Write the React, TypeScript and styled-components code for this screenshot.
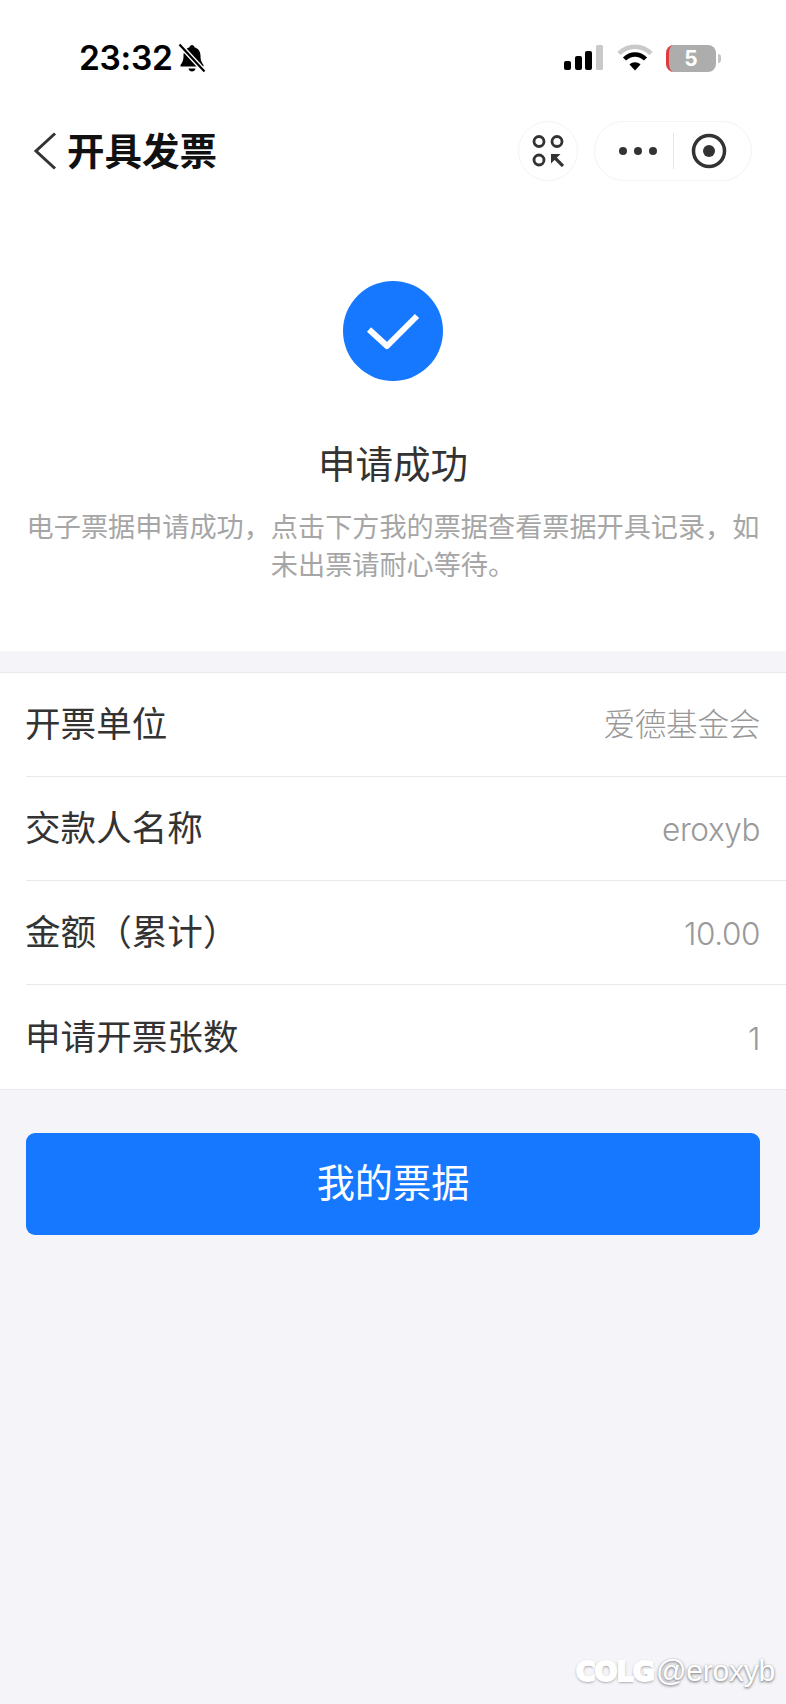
import styled, { createGlobalStyle } from "styled-components";

const GlobalStyle = createGlobalStyle`
  html, body {
    margin: 0;
    padding: 0;
    background: #f4f4f9;
  }
  * {
    box-sizing: border-box;
  }
`;

const cjk = `"Noto Sans CJK SC", "Noto Sans", sans-serif`;
const latinCjk = `Inter, "Noto Sans CJK SC", sans-serif`;

const Page = styled.div`
  position: relative;
  width: 786px;
  height: 1704px;
  overflow: hidden;
  background: #f4f4f9;
  font-family: ${cjk};
`;

const TopSection = styled.section`
  background: #fff;
`;

const StatusBar = styled.div`
  display: flex;
  justify-content: space-between;
  align-items: flex-start;
  height: 121px;
  padding: 43px 65px 0 79px;
`;

const StatusLeft = styled.div`
  display: flex;
  align-items: center;
  gap: 5px;
`;

const Time = styled.span`
  font-family: Inter, "Liberation Sans", sans-serif;
  font-size: 33.500px;
  line-height: 30px;
  font-weight: 600;
  letter-spacing: -0.3px;
  color: #000;
`;

const StatusRight = styled.div`
  display: flex;
  align-items: center;
  gap: 13px;
  height: 30px;
`;

const Battery = styled.div`
  display: flex;
  align-items: center;
  gap: 2px;
`;

const BatteryBody = styled.div`
  width: 50px;
  height: 27px;
  padding-right: 3px;
  border-radius: 8px;
  border-left: 3px solid #e0393e;
  background: #adadad;
  color: #fff;
  font-family: Inter, "Liberation Sans", sans-serif;
  font-size: 21px;
  line-height: 27px;
  font-weight: 700;
  text-align: center;
`;

const BatteryNub = styled.div`
  width: 3px;
  height: 9px;
  border-radius: 0 3px 3px 0;
  background: #c4c4c4;
`;

const NavBar = styled.div`
  display: flex;
  align-items: center;
  height: 60px;
  padding: 0 34px 0 33px;
`;

const BackIcon = styled.svg`
  width: 24px;
  height: 38px;
  margin-right: 10px;
`;

const NavTitle = styled.h1`
  flex: 1;
  margin: 0;
  padding-bottom: 4px;
  font-size: 37.500px;
  line-height: 56px;
  font-weight: 700;
  color: #111;
`;

const RoundButton = styled.div`
  display: flex;
  align-items: center;
  justify-content: center;
  width: 60px;
  height: 60px;
  margin-right: 16px;
  border: 1px solid #f3f3f3;
  border-radius: 50%;
  background: #fff;
`;

const Capsule = styled.div`
  display: flex;
  align-items: center;
  width: 158px;
  height: 60px;
  padding-left: 24px;
  border: 1px solid #f3f3f3;
  border-radius: 30px;
  background: #fff;
`;

const Dots = styled.div`
  display: flex;
  gap: 7px;
  width: 54px;
`;

const Dot = styled.span`
  width: 8px;
  height: 8px;
  border-radius: 50%;
  background: #333;
`;

const CapsuleDivider = styled.div`
  width: 1px;
  height: 36px;
  background: #e4e4e4;
  margin-right: 17px;
`;

const Hero = styled.div`
  display: flex;
  flex-direction: column;
  align-items: center;
  padding: 100px 26px 68px;
`;

const SuccessBadge = styled.div`
  display: flex;
  align-items: center;
  justify-content: center;
  width: 100px;
  height: 100px;
  border-radius: 50%;
  background: #1677ff;
`;

const HeroTitle = styled.h2`
  margin: 56px 0 20px;
  font-size: 37.500px;
  line-height: 50px;
  font-weight: 400;
  color: #333;
`;

const HeroDesc = styled.p`
  margin: 0;
  width: 734px;
  font-size: 27.150px;
  line-height: 38px;
  font-weight: 400;
  text-align: center;
  color: #a6a6a6;
`;

const InfoList = styled.ul`
  margin: 21px 0 0;
  padding: 0 0 0 26px;
  list-style: none;
  background: #fff;
  border-top: 1px solid #e9e9ec;
  border-bottom: 1px solid #e9e9ec;
`;

const InfoRow = styled.li`
  display: flex;
  justify-content: space-between;
  align-items: center;
  height: 104px;
  padding-right: 26px;
  padding-bottom: 6px;
  border-bottom: 1px solid #e9e9ec;

  &:last-child {
    border-bottom: none;
  }
`;

const InfoLabel = styled.span`
  margin-left: -1px;
  font-size: 35.600px;
  color: #333;
`;

const InfoValue = styled.span<{ $latin: boolean }>`
  margin-top: ${(p) => (p.$latin ? "8px" : "0")};
  font-family: ${latinCjk};
  font-size: ${(p) => (p.$latin ? "31.500px" : "31.700px")};
  font-weight: 300;
  letter-spacing: -0.4px;
  color: #999;
`;

const PrimaryButton = styled.button`
  display: block;
  width: 734px;
  height: 102px;
  margin: 43px 26px 0;
  padding: 0 0 8px;
  border: none;
  border-radius: 9px;
  background: #1677ff;
  color: #fff;
  font-family: ${cjk};
  font-size: 38.200px;
  font-weight: 400;
`;

const Watermark = styled.div`
  position: absolute;
  right: 11px;
  bottom: 16px;
  display: flex;
  align-items: center;
  gap: 2px;
  color: #fff;
  text-shadow: 0 1px 3px rgba(0, 0, 0, 0.6);
`;

const WatermarkLogo = styled.span`
  font-family: "DejaVu Sans", sans-serif;
  font-size: 27px;
  font-weight: 700;
  letter-spacing: -1px;
  -webkit-text-stroke: 2px #fff;
`;

const WatermarkName = styled.span`
  font-family: "Liberation Sans", sans-serif;
  font-size: 30px;
  letter-spacing: -0.2px;
`;

const rows = [
  { label: "开票单位", value: "爱德基金会", latin: false },
  { label: "交款人名称", value: "eroxyb", latin: true },
  { label: "金额（累计）", value: "10.00", latin: true },
  { label: "申请开票张数", value: "1", latin: true },
];

const App = () => {
  return (
    <Page>
      <GlobalStyle />
      <TopSection>
        <StatusBar>
          <StatusLeft>
            <Time>23:32</Time>
            <svg width="28" height="30" viewBox="0 0 28 30">
              <path
                d="M14 2c1.300 0 2.300 1 2.400 2.200 3.900 1 6.100 4.200 6.100 8.300 0 4.800 1 6.800 3 9.500v1.500H2.500V22c2-2.700 3-4.700 3-9.500 0-4.100 2.200-7.300 6.100-8.300C11.700 3 12.700 2 14 2z"
                fill="#000"
              />
              <path d="M10.500 25.500h7c-.3 1.900-1.700 3-3.500 3s-3.200-1.100-3.500-3z" fill="#000" />
              <path d="M1.500 1.500l25 27" stroke="#fff" strokeWidth="5" />
              <path d="M1.500 1.500l25 27" stroke="#000" strokeWidth="2.200" />
            </svg>
          </StatusLeft>
          <StatusRight>
            <svg width="40" height="26" viewBox="0 0 40 26">
              <rect x="0" y="16" width="7" height="9" rx="2" fill="#000" />
              <rect x="11" y="11" width="7" height="14" rx="2" fill="#000" />
              <rect x="21" y="6" width="7" height="19" rx="2" fill="#000" />
              <rect x="32" y="0" width="7" height="25" rx="1.500" fill="#c9c9c9" />
            </svg>
            <svg width="36" height="28" viewBox="0 0 36 28">
              <path d="M2 9.500C11 .5 25 .5 34 9.500" fill="none" stroke="#c9c9c9" strokeWidth="4.500" />
              <path d="M7.500 15c6-6 15-6 21 0" fill="none" stroke="#000" strokeWidth="4.500" />
              <path d="M12.500 20.500c3-3 8-3 11 0L18 26.500z" fill="#000" />
            </svg>
            <Battery>
              <BatteryBody>5</BatteryBody>
              <BatteryNub />
            </Battery>
          </StatusRight>
        </StatusBar>
        <NavBar>
          <BackIcon viewBox="0 0 24 38">
            <path d="M22 1.500L3 19l19 17.500" fill="none" stroke="#333" strokeWidth="3" />
          </BackIcon>
          <NavTitle>开具发票</NavTitle>
          <RoundButton>
            <svg width="32" height="32" viewBox="0 0 32 32">
              <g fill="none" stroke="#333" strokeWidth="2.800">
                <circle cx="7" cy="6.500" r="5" />
                <circle cx="25" cy="6.500" r="5" />
                <circle cx="7" cy="25" r="5" />
                <path d="M31 31L21 21" strokeWidth="3.200" />
              </g>
              <path d="M19 19h9.500L19 28.500z" fill="#333" />
            </svg>
          </RoundButton>
          <Capsule>
            <Dots>
              <Dot />
              <Dot />
              <Dot />
            </Dots>
            <CapsuleDivider />
            <svg width="36" height="36" viewBox="0 0 36 36">
              <circle cx="18" cy="18" r="15.500" fill="none" stroke="#333" strokeWidth="3.500" />
              <circle cx="18" cy="18" r="6" fill="#333" />
            </svg>
          </Capsule>
        </NavBar>
        <Hero>
          <SuccessBadge>
            <svg width="58" height="38" viewBox="0 0 58 38">
              <path
                d="M5 17.500L23 34 53 4"
                fill="none"
                stroke="#fff"
                strokeWidth="6"
                strokeLinejoin="round"
              />
            </svg>
          </SuccessBadge>
          <HeroTitle>申请成功</HeroTitle>
          <HeroDesc>
            电子票据申请成功，点击下方我的票据查看票据开具记录，如未出票请耐心等待。
          </HeroDesc>
        </Hero>
      </TopSection>
      <InfoList>
        {rows.map((row) => (
          <InfoRow key={row.label}>
            <InfoLabel>{row.label}</InfoLabel>
            <InfoValue $latin={row.latin}>{row.value}</InfoValue>
          </InfoRow>
        ))}
      </InfoList>
      <PrimaryButton>我的票据</PrimaryButton>
      <Watermark>
        <WatermarkLogo>COLG</WatermarkLogo>
        <WatermarkName>@eroxyb</WatermarkName>
      </Watermark>
    </Page>
  );
};

export default App;
